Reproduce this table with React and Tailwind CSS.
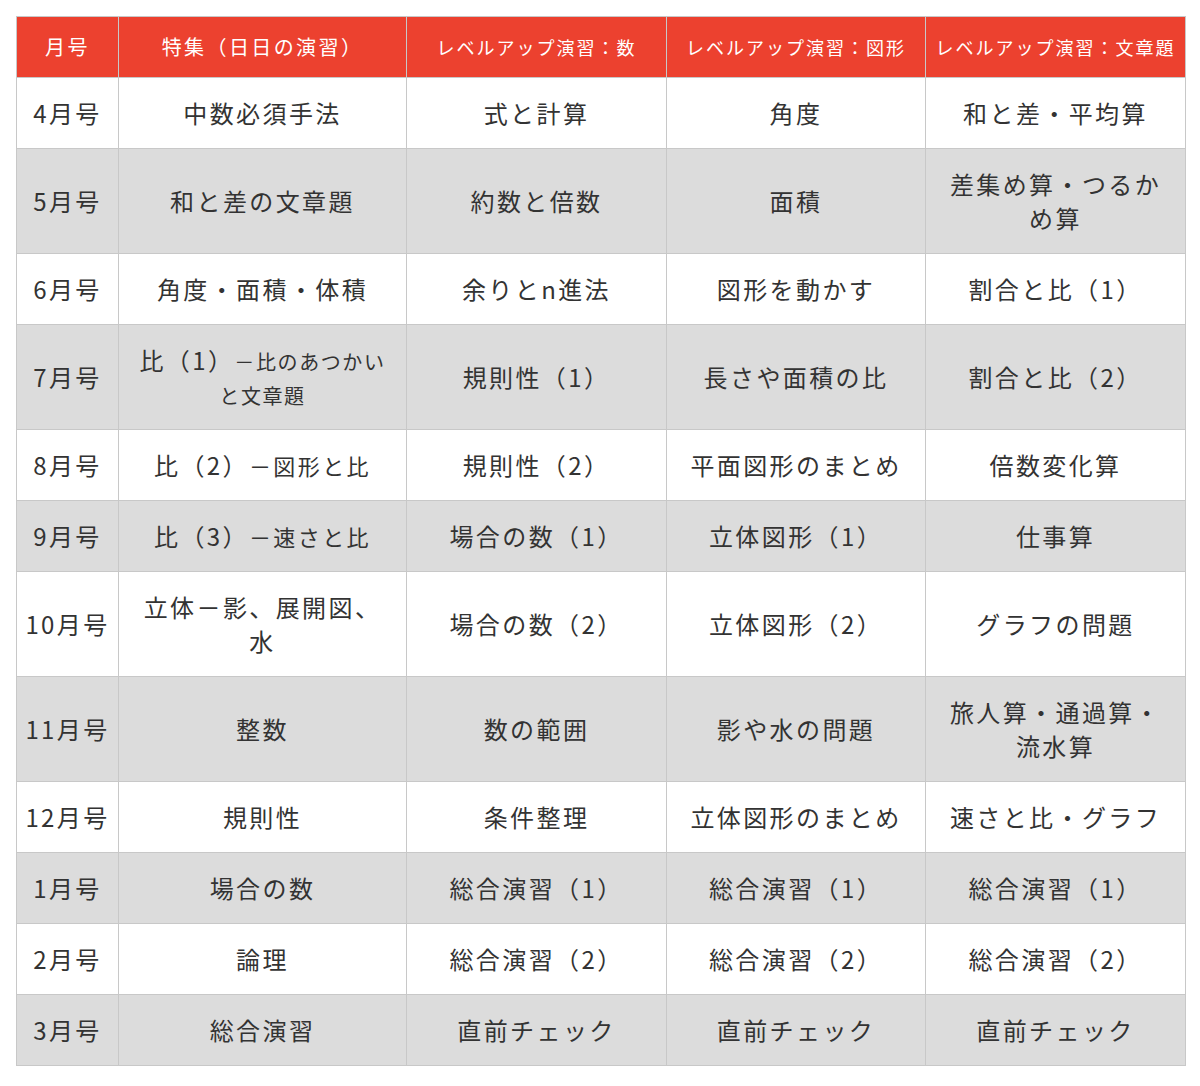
const headers = [
  { label: "月号", big: true },
  { label: "特集（日日の演習）", big: true },
  { label: "レベルアップ演習：数" },
  { label: "レベルアップ演習：図形" },
  { label: "レベルアップ演習：文章題" },
];

const rows = [
  ["4月号", "中数必須手法", "式と計算", "角度", "和と差・平均算"],
  ["5月号", "和と差の文章題", "約数と倍数", "面積", "差集め算・つるかめ算"],
  ["6月号", "角度・面積・体積", "余りとn進法", "図形を動かす", "割合と比（1）"],
  ["7月号", ["比（1）", "－比のあつかいと文章題", "text-[20px] tracking-[1.6px] leading-none"], "規則性（1）", "長さや面積の比", "割合と比（2）"],
  ["8月号", ["比（2）", "－図形と比", "text-[22px] leading-none"], "規則性（2）", "平面図形のまとめ", "倍数変化算"],
  ["9月号", ["比（3）", "－速さと比", "text-[22px] leading-none"], "場合の数（1）", "立体図形（1）", "仕事算"],
  ["10月号", "立体－影、展開図、水", "場合の数（2）", "立体図形（2）", "グラフの問題"],
  ["11月号", "整数", "数の範囲", "影や水の問題", "旅人算・通過算・流水算"],
  ["12月号", "規則性", "条件整理", "立体図形のまとめ", "速さと比・グラフ"],
  ["1月号", "場合の数", "総合演習（1）", "総合演習（1）", "総合演習（1）"],
  ["2月号", "論理", "総合演習（2）", "総合演習（2）", "総合演習（2）"],
  ["3月号", "総合演習", "直前チェック", "直前チェック", "直前チェック"],
];

function Cell({ value }) {
  if (Array.isArray(value)) {
    return (
      <>
        {value[0]}
        <span className={value[2]}>{value[1]}</span>
      </>
    );
  }
  return value;
}

export default function App() {
  return (
    <div className="bg-white min-h-[1086px] pt-4 pl-4 font-['Noto_Sans_CJK_JP','Noto_Sans',sans-serif]">
      <table className="w-[1169px] table-fixed border-collapse border border-[#c8c8c8] text-[#333]">
        <colgroup>
          <col className="w-[102px]" />
          <col className="w-[288px]" />
          <col className="w-[260px]" />
          <col className="w-[259px]" />
          <col className="w-[260px]" />
        </colgroup>
        <thead>
          <tr className="bg-[#ec412f] text-white h-[61px]">
            {headers.map((h, i) => (
              <th
                key={i}
                className={
                  "border border-[#c8c8c8] px-2 font-normal text-center align-middle leading-[26px] " +
                  (h.big ? "text-[20px] tracking-[2.4px]" : "text-[18px] tracking-[2px]")
                }
              >
                {h.label}
              </th>
            ))}
          </tr>
        </thead>
        <tbody>
          {rows.map((row, r) => (
            <tr key={r} className={r % 2 === 1 ? "bg-[#dcdcdc]" : "bg-white"}>
              {row.map((cell, c) => (
                <td
                  key={c}
                  className={
                    "border border-[#c8c8c8] py-[18px] text-center align-middle text-[24px] leading-[34px] tracking-[2.4px] " +
                    (c === 0 ? "px-1" : "px-3")
                  }
                >
                  <Cell value={cell} />
                </td>
              ))}
            </tr>
          ))}
        </tbody>
      </table>
    </div>
  );
}
